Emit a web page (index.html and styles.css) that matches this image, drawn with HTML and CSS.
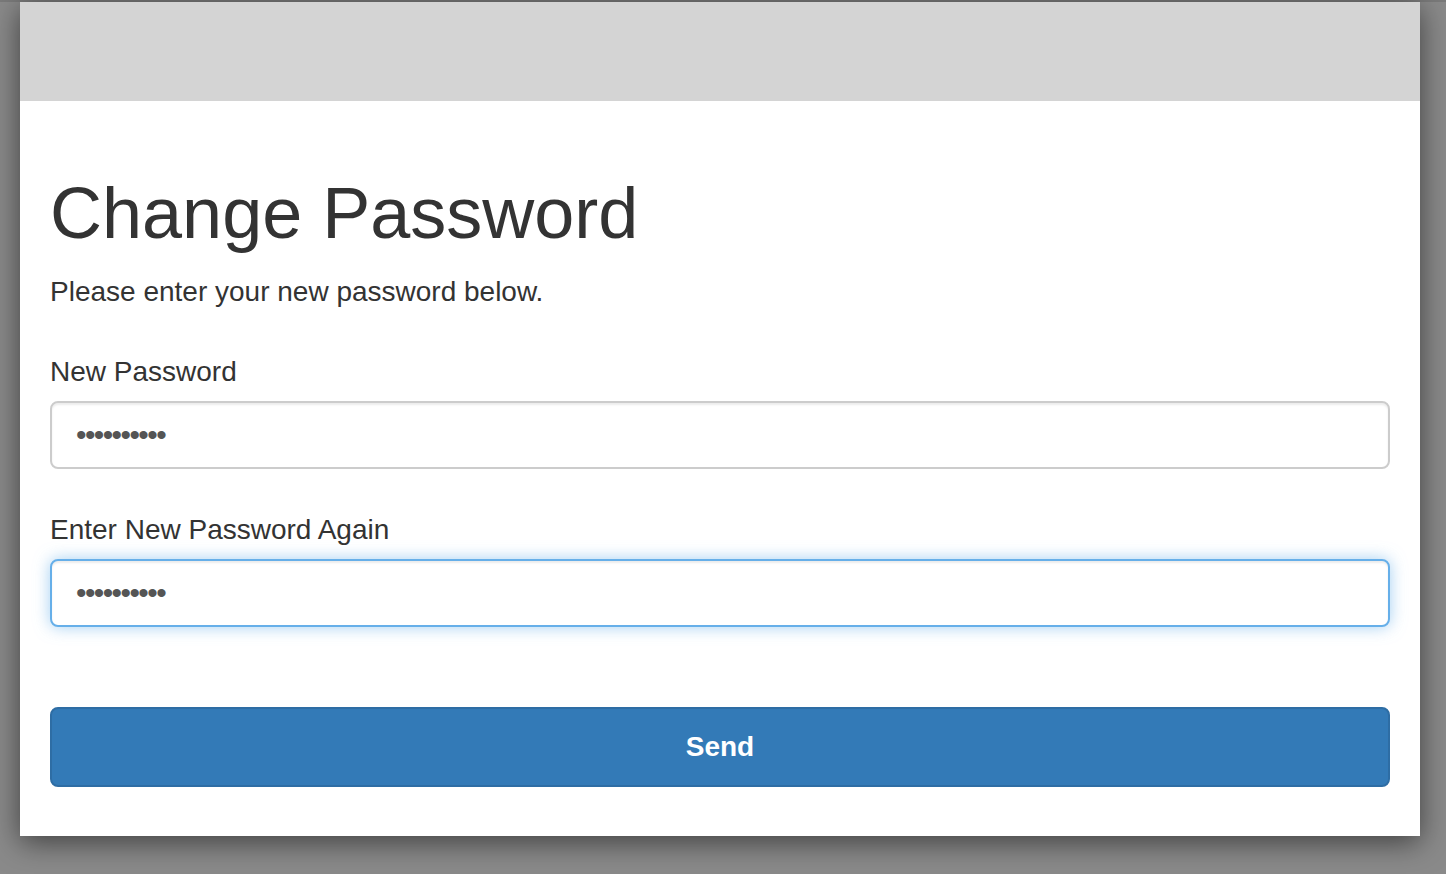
FILE: index.html
```html
<!DOCTYPE html>
<html lang="en">
<head>
<meta charset="utf-8">
<title>Change Password</title>
<link rel="stylesheet" href="styles.css">
</head>
<body>
<div class="window">
  <div class="topbar"></div>
  <div class="content">
    <h1 class="title">Change Password</h1>
    <p class="intro">Please enter your new password below.</p>
    <form class="form">
      <div class="group">
        <label class="label" for="p1">New Password</label>
        <input class="field" id="p1" type="password" value="abcdefghij">
      </div>
      <div class="group">
        <label class="label" for="p2">Enter New Password Again</label>
        <input class="field field-focus" id="p2" type="password" value="abcdefghij">
      </div>
      <button class="send" type="button">Send</button>
    </form>
  </div>
</div>
</body>
</html>
```

FILE: styles.css
```css
html, body {
  margin: 0;
  padding: 0;
}
body {
  height: 874px;
  overflow: hidden;
  padding-top: 2px;
  box-sizing: border-box;
  background: linear-gradient(#7a7a7a 0, #7a7a7a 2px, #8a8a8a 2px);
  font-family: "Liberation Sans", Arial, sans-serif;
  color: #333;
}
.window {
  margin-left: 20px;
  width: 1400px;
  background: #fff;
  box-shadow: 0 6px 28px rgba(0, 0, 0, 0.55);
}
.topbar {
  height: 99px;
  background: #d4d4d4;
}
.content {
  padding: 73px 30px 49px;
}
.title {
  margin: 0;
  font-size: 72px;
  font-weight: 400;
  line-height: 1.1;
  color: #333;
}
.intro {
  margin: 19px 0 0;
  font-size: 28px;
  line-height: 40px;
}
.form {
  margin-top: 40px;
}
.group {
  margin-bottom: 41px;
}
.label {
  display: block;
  font-size: 28px;
  line-height: 40px;
  margin-bottom: 9px;
}
.field {
  display: block;
  width: 100%;
  box-sizing: border-box;
  height: 68px;
  padding: 10px 24px;
  border: 2px solid #ccc;
  border-radius: 8px;
  font-family: "Liberation Sans", Arial, sans-serif;
  font-size: 30px;
  color: #555;
  background: #fff;
  letter-spacing: -1.6px;
  outline: none;
  box-shadow: inset 0 2px 2px rgba(0, 0, 0, 0.075);
}
.field-focus {
  border-color: #66afe9;
  box-shadow: inset 0 2px 2px rgba(0, 0, 0, 0.075), 0 0 16px rgba(102, 175, 233, 0.6);
}
.send {
  display: block;
  width: 100%;
  height: 80px;
  margin-top: 80px;
  background: #337ab7;
  border: 2px solid #2e6da4;
  border-radius: 8px;
  color: #fff;
  font-family: "Liberation Sans", Arial, sans-serif;
  font-size: 28px;
  font-weight: 700;
}
```
